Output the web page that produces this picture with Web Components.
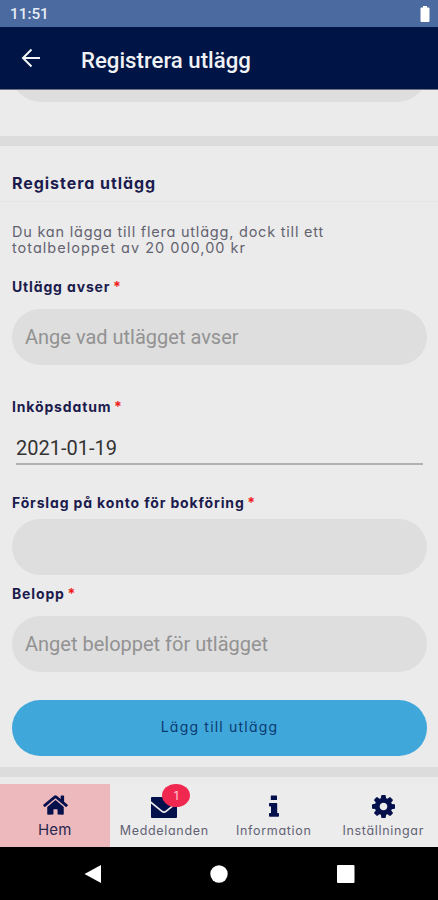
<!DOCTYPE html>
<html lang="sv">
<head>
<meta charset="utf-8">
<title>Registrera utlägg</title>
<style>
  body {
    margin: 0;
    background-color: #ebebeb;
  }
</style>
</head>
<body>
<expense-app></expense-app>

<script>
class StatusBar extends HTMLElement {
  constructor() {
    super();
    this.attachShadow({ mode: 'open' }).innerHTML = /* html */ `
      <style>
        :host {
          display: flex;
          justify-content: space-between;
          align-items: center;
          height: 27px;
          padding: 1px 8px 0 10px;
          box-sizing: border-box;
          background-color: #4b6a9f;
          color: #e6ecf5;
          font: 500 15.3px Roboto, sans-serif;
        }
        svg { display: block; }
      </style>
      <slot></slot>
      <svg width="10" height="16" viewBox="0 0 10 16">
        <path fill="#fff" d="M3 0h4v1.5h1.5q1 0 1 1V15q0 1-1 1h-7q-1 0-1-1V2.500q0-1 1-1H3z"/>
      </svg>
    `;
  }
}
customElements.define('status-bar', StatusBar);

class AppHeader extends HTMLElement {
  constructor() {
    super();
    this.attachShadow({ mode: 'open' }).innerHTML = /* html */ `
      <style>
        :host {
          display: flex;
          align-items: center;
          gap: 40px;
          height: 63px;
          padding: 0 21px;
          box-sizing: border-box;
          background-color: #001545;
          border-bottom: 1px solid #6f7184;
          color: #f0f1f5;
          font: 500 22.2px Roboto, sans-serif;
        }
        svg { display: block; margin-top: -1px; }
        span { padding-top: 3px; }
      </style>
      <svg width="20" height="20" viewBox="0 0 20 20" fill="none" stroke="#f4f5f8" stroke-width="2">
        <path d="M19 10H2.500M10.500 1.500L2 10l8.500 8.500"/>
      </svg>
      <span><slot></slot></span>
    `;
  }
}
customElements.define('app-header', AppHeader);

class FieldLabel extends HTMLElement {
  constructor() {
    super();
    this.attachShadow({ mode: 'open' }).innerHTML = /* html */ `
      <style>
        :host {
          display: block;
          height: 18px;
          line-height: 18px;
          font-size: 14px;
          font-weight: 700;
          letter-spacing: .85px;
          white-space: nowrap;
        }
        span { margin-left: -1.500px; color: #f01a1a; }
      </style>
      <slot></slot> <span>*</span>
    `;
  }
}
customElements.define('field-label', FieldLabel);

class PillField extends HTMLElement {
  constructor() {
    super();
    this.attachShadow({ mode: 'open' }).innerHTML = /* html */ `
      <style>
        :host {
          display: flex;
          align-items: center;
          height: 56px;
          padding: 0 13px;
          box-sizing: border-box;
          border-radius: 28px;
          background-color: #dedede;
          color: #929292;
          font: 400 20px Roboto, sans-serif;
          letter-spacing: 0;
        }
      </style>
      <slot></slot>
    `;
  }
}
customElements.define('pill-field', PillField);

class DateField extends HTMLElement {
  constructor() {
    super();
    this.attachShadow({ mode: 'open' }).innerHTML = /* html */ `
      <style>
        :host {
          display: block;
          height: 29px;
          line-height: 24px;
          box-sizing: border-box;
          border-bottom: 2px solid #b0b0b0;
          color: #333;
          font-family: Roboto, sans-serif;
          font-size: 20px;
        }
      </style>
      <slot></slot>
    `;
  }
}
customElements.define('date-field', DateField);

class SubmitButton extends HTMLElement {
  constructor() {
    super();
    this.attachShadow({ mode: 'open' }).innerHTML = /* html */ `
      <style>
        :host {
          display: flex;
          align-items: center;
          justify-content: center;
          height: 56px;
          padding-bottom: 3px;
          box-sizing: border-box;
          border-radius: 28px;
          background-color: #40a7da;
          color: #0b3a70;
          font-size: 14px;
          font-weight: 400;
          letter-spacing: 1.2px;
        }
      </style>
      <slot></slot>
    `;
  }
}
customElements.define('submit-button', SubmitButton);

const icons = {
  home: '<svg width="25" height="22" viewBox="0 0 576 512"><path d="M280.370 148.260L96 300.110V464a16 16 0 0 0 16 16l112.060-.29a16 16 0 0 0 15.920-16V368a16 16 0 0 1 16-16h64a16 16 0 0 1 16 16v95.640a16 16 0 0 0 16 16.050L464 480a16 16 0 0 0 16-16V300L295.670 148.260a12.190 12.190 0 0 0-15.300 0zM571.600 251.470L488 182.560V44.050a12 12 0 0 0-12-12h-56a12 12 0 0 0-12 12v72.610L318.470 43a48 48 0 0 0-61 0L4.340 251.470a12 12 0 0 0-1.600 16.900l25.500 31A12 12 0 0 0 45.150 301l235.220-193.740a12.190 12.190 0 0 1 15.300 0L530.900 301a12 12 0 0 0 16.900-1.600l25.500-31a12 12 0 0 0-1.700-16.930z"/></svg>',
  mail: '<svg width="26" height="21" viewBox="0 0 26 21"><path d="M0 1q0-1 1-1h24q1 0 1 1v3.200L14.800 13.600q-1.800 1.300-3.600 0L0 4.200zM0 6.500l10.500 8.600q2.500 1.800 5 0L26 6.500V20q0 1-1 1H1q-1 0-1-1z"/></svg>',
  info: '<svg width="10" height="22" viewBox="0 0 10 22"><path d="M2.300.5h5.200q.5 0 .5.500v3.500q0 .5-.5.500H2.300q-.5 0-.5-.5V1q0-.5.500-.5zM.8 8h6.700q.7 0 .7.700v9.300h1q.8 0 .8.800v2.100q0 .8-.8.800H.8q-.8 0-.8-.8v-2.100q0-.8.8-.8h1.200v-6.500H.8q-.8 0-.8-.8V8.800Q0 8 .8 8z"/></svg>',
  cog: '<svg width="23" height="23" viewBox="128 128 1536 1536"><path d="M1152 896q0-106-75-181t-181-75-181 75-75 181 75 181 181 75 181-75 75-181zm512-109v222q0 12-8 23t-20 13l-185 28q-19 54-39 91 35 50 107 138 10 12 10 25t-9 23q-27 37-99 108t-94 71q-12 0-26-9l-138-108q-44 23-91 38-16 136-29 186-7 28-36 28h-222q-14 0-24.500-8.500t-11.500-21.500l-28-184q-49-16-90-37l-141 107q-10 9-25 9-14 0-25-11-126-114-165-168-7-10-7-23 0-12 8-23 15-21 51-66.500t54-70.500q-27-50-41-99l-183-27q-13-2-21-12.500t-8-23.500v-222q0-12 8-23t19-13l186-28q14-46 39-92-40-57-107-138-10-12-10-24 0-10 9-23 26-36 98.500-107.500t94.500-71.500q13 0 26 10l138 107q44-23 91-38 16-136 29-186 7-28 36-28h222q14 0 24.500 8.500t11.500 21.500l28 184q49 16 90 37l142-107q9-9 24-9 13 0 25 10 129 119 165 170 7 8 7 22 0 12-8 23-15 21-51 66.500t-54 70.500q26 50 41 98l183 28q13 2 21 12.500t8 23.500z"/></svg>'
};

class NavItem extends HTMLElement {
  connectedCallback() {
    const badge = this.getAttribute('badge');
    this.attachShadow({ mode: 'open' }).innerHTML = /* html */ `
      <style>
        :host {
          display: flex;
          flex-direction: column;
          align-items: center;
          gap: 3px;
          padding-top: 10px;
          box-sizing: border-box;
          color: #626274;
          font-size: 12.500px;
          letter-spacing: .68px;
          white-space: nowrap;
        }
        :host([active]) {
          background-color: #edb9bd;
          color: #2b2850;
          font-size: 15px;
          letter-spacing: .2px;
        }
        .icon {
          position: relative;
          display: flex;
          align-items: center;
          justify-content: center;
          height: 24px;
          fill: #04104c;
        }
        :host([active]) .icon { padding: 0 0 2px 1px; height: 22px; }
        :host([active]) .text { line-height: 18px; }
        :host([icon="mail"]) .icon { padding-top: 3px; height: 21px; }
        .text { line-height: 20px; }
        .badge {
          position: absolute;
          left: 11px;
          top: -10px;
          width: 28px;
          height: 23px;
          line-height: 24px;
          border-radius: 50%;
          background-color: #f02850;
          color: #ffc9d3;
          font-size: 12px;
          letter-spacing: 0;
          text-align: center;
        }
        svg { display: block; }
      </style>
      <div class="icon">
        ${icons[this.getAttribute('icon')]}
        ${badge ? `<span class="badge">${badge}</span>` : ''}
      </div>
      <span class="text"><slot></slot></span>
    `;
  }
}
customElements.define('nav-item', NavItem);

class TabBar extends HTMLElement {
  constructor() {
    super();
    this.attachShadow({ mode: 'open' }).innerHTML = /* html */ `
      <style>
        :host {
          display: grid;
          grid-template-columns: repeat(4, 1fr);
          height: 63px;
          background-color: #ececec;
        }
      </style>
      <slot></slot>
    `;
  }
}
customElements.define('tab-bar', TabBar);

class SystemNav extends HTMLElement {
  constructor() {
    super();
    this.attachShadow({ mode: 'open' }).innerHTML = /* html */ `
      <style>
        :host {
          display: flex;
          justify-content: center;
          gap: 108.500px;
          height: 53px;
          background-color: #000;
          fill: #fff;
        }
        svg { display: block; width: 18px; height: 18px; margin-top: 18px; }
      </style>
      <svg viewBox="0 0 18 18"><path d="M17 0v18L.5 9z"/></svg>
      <svg viewBox="0 0 18 18"><circle cx="9" cy="9" r="8.700"/></svg>
      <svg viewBox="0 0 18 18"><rect width="17.500" height="18" rx="1"/></svg>
    `;
  }
}
customElements.define('system-nav', SystemNav);

class ExpenseApp extends HTMLElement {
  constructor() {
    super();
    this.attachShadow({ mode: 'open' }).innerHTML = /* html */ `
      <style>
        :host {
          display: flex;
          flex-direction: column;
          height: 900px;
          overflow: hidden;
          color: #1c1b4d;
          font-family: Inter, "Liberation Sans", sans-serif;
          font-feature-settings: "cv11";
        }
        .previous {
          display: flex;
          flex-direction: column;
          justify-content: flex-end;
          height: 46px;
          padding: 0 12px 34px;
          box-sizing: border-box;
          overflow: hidden;
        }
        .previous pill-field { flex: none; }
        .band { height: 10px; background-color: #dcdcdc; }
        h2 {
          height: 56px;
          margin: 0;
          padding: 0 12px;
          box-sizing: border-box;
          border-bottom: 1px solid #e5e5e5;
          line-height: 74px;
          font-size: 16px;
          font-weight: 700;
          letter-spacing: .95px;
        }
        .form {
          display: flex;
          flex-direction: column;
          height: 565px;
          padding: 22px 11px 0 12px;
          box-sizing: border-box;
        }
        p {
          margin: 0 0 22px;
          color: #636370;
          font-size: 14.500px;
          line-height: 16px;
          letter-spacing: .78px;
          white-space: nowrap;
        }
        .limit { letter-spacing: 1.010px; }
        .what { margin: 13px 0 33px; }
        .date { margin: 20px 4px 29px; }
        .account { margin: 7px 0 10px; }
        .amount { margin: 13px 0 28px; }
        tab-bar { margin-top: 7px; }
      </style>
      <status-bar>11:51</status-bar>
      <app-header>Registrera utlägg</app-header>
      <div class="previous"><pill-field></pill-field></div>
      <div class="band"></div>
      <h2>Registera utlägg</h2>
      <div class="form">
        <p>Du kan lägga till flera utlägg, dock till ett<br><span class="limit">totalbeloppet av 20 000,00 kr</span></p>
        <field-label>Utlägg avser</field-label>
        <pill-field class="what">Ange vad utlägget avser</pill-field>
        <field-label>Inköpsdatum</field-label>
        <date-field class="date">2021-01-19</date-field>
        <field-label>Förslag på konto för bokföring</field-label>
        <pill-field class="account"></pill-field>
        <field-label>Belopp</field-label>
        <pill-field class="amount">Anget beloppet för utlägget</pill-field>
        <submit-button>Lägg till utlägg</submit-button>
      </div>
      <div class="band"></div>
      <tab-bar>
        <nav-item icon="home" active>Hem</nav-item>
        <nav-item icon="mail" badge="1">Meddelanden</nav-item>
        <nav-item icon="info">Information</nav-item>
        <nav-item icon="cog">Inställningar</nav-item>
      </tab-bar>
      <system-nav></system-nav>
    `;
  }
}
customElements.define('expense-app', ExpenseApp);
</script>
</body>
</html>
